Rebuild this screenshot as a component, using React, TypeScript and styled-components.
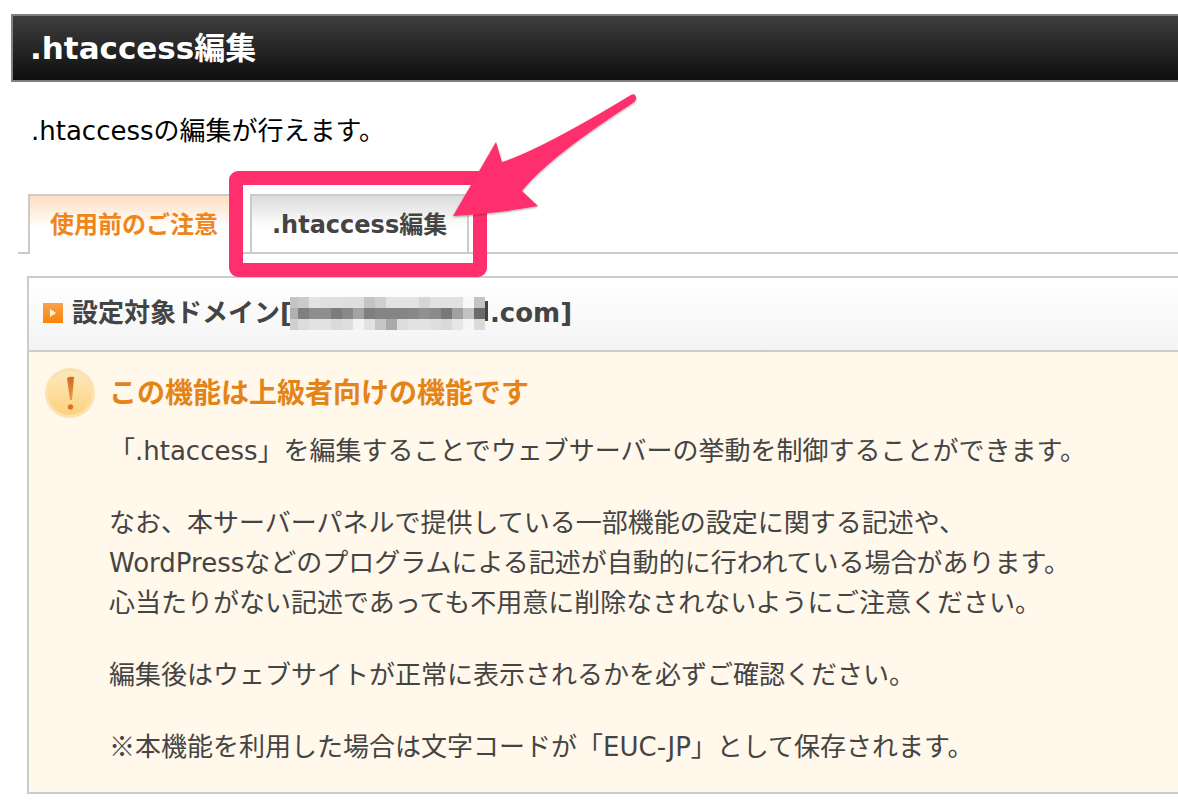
import React from "react";
import styled, { createGlobalStyle } from "styled-components";

const GlobalStyle = createGlobalStyle`
  * { box-sizing: border-box; }
  body {
    margin: 0;
    background: #fff;
    color: #444;
    font-family: "DejaVu Sans", "Noto Sans CJK JP", sans-serif;
    font-size: 26px;
    line-height: 40px;
  }
`;

const Page = styled.main`
  padding: 14px 0 12px 11px;
`;

const TitleBar = styled.header`
  border: 2px solid #808080;
  border-right: 0;
  background: linear-gradient(#3e3e3e, #0e0e0e);
  padding: 12px 17px;
`;

const Title = styled.h1`
  margin: 0;
  color: #fff;
  font-size: 31px;
  line-height: 40px;
`;

const Intro = styled.p`
  margin: 29px 0 43px 20px;
  color: #000;
`;

const Tabs = styled.nav`
  display: flex;
  gap: 10px;
  margin-left: 7px;
  padding-left: 10px;
  border-bottom: 2px solid #ccc;
`;

const Tab = styled.a<{ $active?: boolean }>`
  height: ${(p) => (p.$active ? "60px" : "58px")};
  margin-bottom: ${(p) => (p.$active ? "-2px" : "0")};
  padding: 9px 20px;
  border: 2px solid #ccc;
  border-bottom: 0;
  background: ${(p) =>
    p.$active
      ? "linear-gradient(#ffdfc2, #fff 32px)"
      : "linear-gradient(#dcdcdc, #fff 32px)"};
  color: ${(p) => (p.$active ? "#f08519" : "#444")};
  font-size: 24px;
  font-weight: bold;
  text-decoration: none;
  white-space: nowrap;
`;

const TabItem = styled.div`
  position: relative;
  display: flex;
`;

const Callout = styled.svg`
  position: absolute;
  left: -24px;
  top: -104px;
  overflow: visible;
  pointer-events: none;
`;

const Panel = styled.section`
  margin: 22px 0 0 16px;
  border: 2px solid #ccc;
  border-right: 0;
`;

const PanelHeader = styled.h2`
  display: flex;
  align-items: center;
  margin: 0;
  padding: 15px 14px 17px;
  border-bottom: 2px solid #ccc;
  background: linear-gradient(#fff, #f4f4f6);
  font-size: 26px;
  line-height: 40px;
  white-space: nowrap;
`;

const Bullet = styled.svg`
  flex: none;
  margin-right: 9px;
`;

const Mosaic = styled.svg`
  flex: none;
  margin-left: -2px;
`;

const Notice = styled.div`
  display: flex;
  gap: 14px;
  padding: 16px 16px 25px;
  background: #fff8eb;
`;

const NoticeIcon = styled.svg`
  flex: none;
`;

const NoticeTitle = styled.h3`
  margin: 6px 0 17px;
  color: #e48417;
  font-size: 28px;
  line-height: 40px;
`;

const Text = styled.p`
  margin: 0 0 32px;
  &:last-child { margin-bottom: 0; }
`;

const ReferenceMark = styled.span`
  font-family: "Noto Sans CJK JP", sans-serif;
  line-height: 1;
`;

const mosaic = [
  ["#c4c4c4", "#cbcbcb", "#e6e2e2", "#dfdfdf", "#dfdfdf", "#dedede", "#dedede", "#c4c4c4", "#cfcfcf", "#e4e2e2", "#e4e2e2", "#e4e2e2", "#d9d5d5", "#e2e0e0", "#e2e0e0", "#e2e0e0", "#f8f8f8", "#c4c4c4"],
  ["#b0b0b0", "#808080", "#8e8e8e", "#8e8e8e", "#7c7c7c", "#888", "#a3a3a3", "#7f7f7f", "#858585", "#858585", "#858585", "#888", "#909090", "#8a8a8a", "#787878", "#a0a0a0", "#c2c2c2", "#6b6b6b"],
  ["#cfcfcf", "#dcdcdc", "#e2e2e2", "#e2e2e2", "#dadada", "#dedede", "#f3f3f3", "#e2e2e2", "#c6c6c6", "#a9a9a9", "#dcdcdc", "#e2e2e2", "#e2e2e2", "#dedede", "#d9d9d9", "#e6e6e6", "#f5f5f5", "#dadada"],
];

const Redacted = () => (
  <Mosaic width="200" height="33" viewBox="0 0 200 33" role="img" aria-label="hidden" shapeRendering="crispEdges">
    <rect x="195" y="4" width="2" height="20" fill="#444" />
    {mosaic.map((row, y) =>
      row.map((fill, x) => (
        <rect key={`${x}-${y}`} x={x === 0 ? 0 : x * 11 - 3} y={y * 11} width={x === 0 ? 8 : x === 17 ? 11 : 11} height="11" fill={fill} />
      ))
    )}
    <rect x="196" y="4" width="2" height="20" fill="#444" />
  </Mosaic>
);

export default function App() {
  return (
    <>
      <GlobalStyle />
      <Page>
        <TitleBar>
          <Title>.htaccess編集</Title>
        </TitleBar>
        <Intro>.htaccessの編集が行えます。</Intro>
        <Tabs>
          <Tab href="#notice" $active>使用前のご注意</Tab>
          <TabItem>
            <Tab href="#edit">.htaccess編集</Tab>
            <Callout width="420" height="190" viewBox="226 90 420 190" aria-hidden="true">
              <defs>
                <filter id="arrow-shadow" x="-10%" y="-10%" width="120%" height="125%">
                  <feDropShadow dx="0" dy="1" stdDeviation="1" floodColor="#000" floodOpacity="0.35" />
                </filter>
              </defs>
              <rect x="236" y="178" width="244" height="92" rx="2" fill="none" stroke="#ff2f6d" strokeWidth="14" strokeLinejoin="round" />
              <path d="M453 216 L496 142 L502 162 Q540 150 631 95 Q635 93 636 97 Q637 100 633 103 Q548 158 522 191 L538 206 Q500 213 453 216Z" fill="#ff2f6d" filter="url(#arrow-shadow)" />
            </Callout>
          </TabItem>
        </Tabs>
        <Panel id="notice">
          <PanelHeader>
            <Bullet width="20" height="20" viewBox="0 0 20 20" aria-hidden="true">
              <defs>
                <linearGradient id="bullet" x2="0" y2="1">
                  <stop offset="0" stopColor="#f7a251" />
                  <stop offset="1" stopColor="#fb8205" />
                </linearGradient>
              </defs>
              <rect width="20" height="20" fill="url(#bullet)" />
              <path d="M7 6 L13 10 L7 14Z" fill="#fff1de" />
            </Bullet>
            設定対象ドメイン[<Redacted />.com]
          </PanelHeader>
          <Notice>
            <NoticeIcon width="50" height="50" viewBox="0 0 50 50" aria-hidden="true">
              <defs>
                <linearGradient id="disc" x2="0" y2="1">
                  <stop offset="0" stopColor="#fde8be" />
                  <stop offset="1" stopColor="#fcd27c" />
                </linearGradient>
                <linearGradient id="mark" x2="0" y2="1">
                  <stop offset="0" stopColor="#cf6a1c" />
                  <stop offset="1" stopColor="#e89a45" />
                </linearGradient>
              </defs>
              <circle cx="25" cy="25" r="25" fill="#fbe2ae" />
              <circle cx="25" cy="25" r="22" fill="url(#disc)" />
              <path d="M22 10 Q25 8 29 9 L27 32 H25Z" fill="url(#mark)" />
              <circle cx="25.5" cy="39" r="2.7" fill="#d8761d" />
            </NoticeIcon>
            <div>
              <NoticeTitle>この機能は上級者向けの機能です</NoticeTitle>
              <Text>「.htaccess」を編集することでウェブサーバーの挙動を制御することができます。</Text>
              <Text>
                なお、本サーバーパネルで提供している一部機能の設定に関する記述や、<br />
                WordPressなどのプログラムによる記述が自動的に行われている場合があります。<br />
                心当たりがない記述であっても不用意に削除なされないようにご注意ください。
              </Text>
              <Text>編集後はウェブサイトが正常に表示されるかを必ずご確認ください。</Text>
              <Text><ReferenceMark>※</ReferenceMark>本機能を利用した場合は文字コードが「EUC-JP」として保存されます。</Text>
            </div>
          </Notice>
        </Panel>
      </Page>
    </>
  );
}
